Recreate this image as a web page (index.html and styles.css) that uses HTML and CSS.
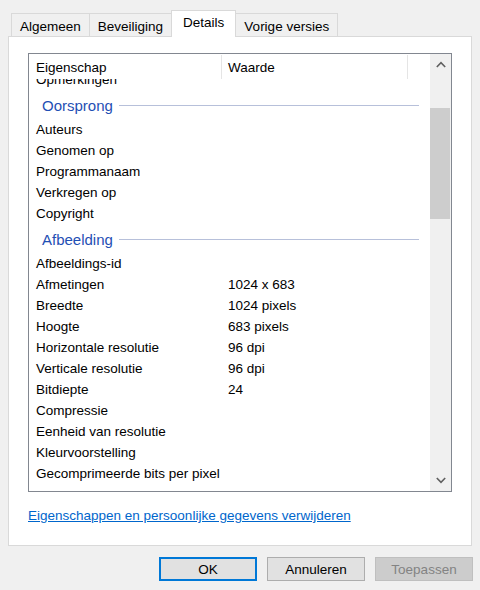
FILE: index.html
```html
<!DOCTYPE html>
<html lang="nl">
<head>
<meta charset="utf-8">
<title>Eigenschappen</title>
<link rel="stylesheet" href="styles.css">
</head>
<body>
<div class="dialog">
  <div class="tabs">
    <div class="tab">Algemeen</div>
    <div class="tab">Beveiliging</div>
    <div class="tab tab-active">Details</div>
    <div class="tab">Vorige versies</div>
  </div>
  <div class="panel">
    <div class="listview">
      <div class="lv-main">
        <div class="lv-header">
          <div class="hcol hcol-name">Eigenschap</div>
          <div class="hcol hcol-value">Waarde</div>
          <div class="hcol hcol-rest"></div>
        </div>
        <div class="lv-body">
          <div class="lv-content">
            <div class="row"><span class="c-name">Opmerkingen</span><span class="c-val"></span></div>
            <div class="group"><span class="g-title">Oorsprong</span><span class="g-line"></span></div>
            <div class="row"><span class="c-name">Auteurs</span><span class="c-val"></span></div>
            <div class="row"><span class="c-name">Genomen op</span><span class="c-val"></span></div>
            <div class="row"><span class="c-name">Programmanaam</span><span class="c-val"></span></div>
            <div class="row"><span class="c-name">Verkregen op</span><span class="c-val"></span></div>
            <div class="row"><span class="c-name">Copyright</span><span class="c-val"></span></div>
            <div class="group"><span class="g-title">Afbeelding</span><span class="g-line"></span></div>
            <div class="row"><span class="c-name">Afbeeldings-id</span><span class="c-val"></span></div>
            <div class="row"><span class="c-name">Afmetingen</span><span class="c-val">1024 x 683</span></div>
            <div class="row"><span class="c-name">Breedte</span><span class="c-val">1024 pixels</span></div>
            <div class="row"><span class="c-name">Hoogte</span><span class="c-val">683 pixels</span></div>
            <div class="row"><span class="c-name">Horizontale resolutie</span><span class="c-val">96 dpi</span></div>
            <div class="row"><span class="c-name">Verticale resolutie</span><span class="c-val">96 dpi</span></div>
            <div class="row"><span class="c-name">Bitdiepte</span><span class="c-val">24</span></div>
            <div class="row"><span class="c-name">Compressie</span><span class="c-val"></span></div>
            <div class="row"><span class="c-name">Eenheid van resolutie</span><span class="c-val"></span></div>
            <div class="row"><span class="c-name">Kleurvoorstelling</span><span class="c-val"></span></div>
            <div class="row"><span class="c-name">Gecomprimeerde bits per pixel</span><span class="c-val"></span></div>
          </div>
        </div>
      </div>
      <div class="scrollbar">
        <div class="sb-btn">
          <svg width="10" height="7" viewBox="0 0 10 7"><path d="M0.8 6 L5 1.6 L9.2 6" fill="none" stroke="#606060" stroke-width="1.6"/></svg>
        </div>
        <div class="sb-track"><div class="sb-thumb"></div></div>
        <div class="sb-btn">
          <svg width="10" height="7" viewBox="0 0 10 7"><path d="M0.8 1 L5 5.4 L9.2 1" fill="none" stroke="#606060" stroke-width="1.6"/></svg>
        </div>
      </div>
    </div>
    <a class="link" href="#">Eigenschappen en persoonlijke gegevens verwijderen</a>
  </div>
  <div class="buttons">
    <button class="btn btn-default">OK</button>
    <button class="btn">Annuleren</button>
    <button class="btn btn-disabled">Toepassen</button>
  </div>
</div>
</body>
</html>
```

FILE: styles.css
```css
* { box-sizing: border-box; }
html, body {
  margin: 0;
  padding: 0;
  background: #f0f0f0;
}
body {
  font-family: "Liberation Sans", Arial, sans-serif;
  font-size: 13.5px;
  color: #000;
  width: 480px;
  height: 590px;
  overflow: hidden;
}
.dialog {
  padding: 10px 0 0 8px;
}
.tabs {
  display: flex;
  align-items: flex-end;
  height: 26px;
  padding-left: 3px;
}
.tab {
  height: 23px;
  padding: 2px 8px 0;
  margin-left: -1px;
  border: 1px solid #d9d9d9;
  border-bottom: none;
  background: #f0f0f0;
  line-height: 22px;
  white-space: nowrap;
}
.tab:first-child { margin-left: 0; }
.tab-active {
  position: relative;
  z-index: 1;
  height: 27px;
  margin-bottom: -1px;
  background: #fff;
  padding: 0 11px;
  line-height: 24px;
}
.panel {
  width: 464px;
  height: 510px;
  background: #fff;
  border: 1px solid #d9d9d9;
  padding: 16px 0 0 19px;
}
.listview {
  display: flex;
  width: 424px;
  height: 439px;
  border: 1px solid #828790;
  background: #fff;
}
.lv-main {
  width: 401px;
  display: flex;
  flex-direction: column;
  overflow: hidden;
}
.lv-header {
  display: flex;
  height: 25px;
  flex: none;
  position: relative;
  z-index: 1;
  background: #fff;
}
.hcol {
  line-height: 26px;
  border-right: 1px solid #e5e5e5;
  height: 24px;
  margin-top: 1px;
  white-space: nowrap;
}
.hcol-name { width: 193px; padding-left: 7px; }
.hcol-value { width: 186px; padding-left: 6px; }
.hcol-rest { flex: 1; border-right: none; }
.lv-body {
  flex: 1;
  overflow: hidden;
}
.lv-content {
  margin-top: -10px;
}
.row {
  display: flex;
  height: 21px;
  line-height: 21px;
  white-space: nowrap;
}
.c-name { width: 192px; padding-left: 7px; }
.c-val { padding-left: 7px; }
.group {
  display: flex;
  align-items: center;
  height: 29px;
  padding: 6px 11px 4px 13px;
}
.g-title {
  font-size: 15px;
  line-height: 19px;
  color: #1f4fb4;
  white-space: nowrap;
}
.g-line {
  flex: 1;
  height: 1px;
  margin-left: 6px;
  background: #b7c0da;
}
.scrollbar {
  width: 21px;
  display: flex;
  flex-direction: column;
  background: #f0f0f0;
}
.sb-btn {
  height: 21px;
  display: flex;
  align-items: center;
  justify-content: center;
  flex: none;
}
.sb-track {
  flex: 1;
  padding: 33px 1px 0 0;
}
.sb-thumb {
  height: 111px;
  background: #cdcdcd;
}
.link {
  display: block;
  margin-top: 15px;
  line-height: 17px;
  color: #0066cc;
  text-decoration: underline;
  white-space: nowrap;
}
.buttons {
  display: flex;
  justify-content: flex-end;
  gap: 10px;
  padding-right: 7px;
  margin-top: 11px;
}
.btn {
  width: 98px;
  height: 24px;
  font-family: "Liberation Sans", Arial, sans-serif;
  font-size: 13.5px;
  color: #000;
  background: #e1e1e1;
  border: 1px solid #adadad;
  padding: 0;
  margin: 0;
}
.btn-default {
  border: 2px solid #0078d7;
}
.btn-disabled {
  background: #cccccc;
  border-color: #bfbfbf;
  color: #838383;
}
```
